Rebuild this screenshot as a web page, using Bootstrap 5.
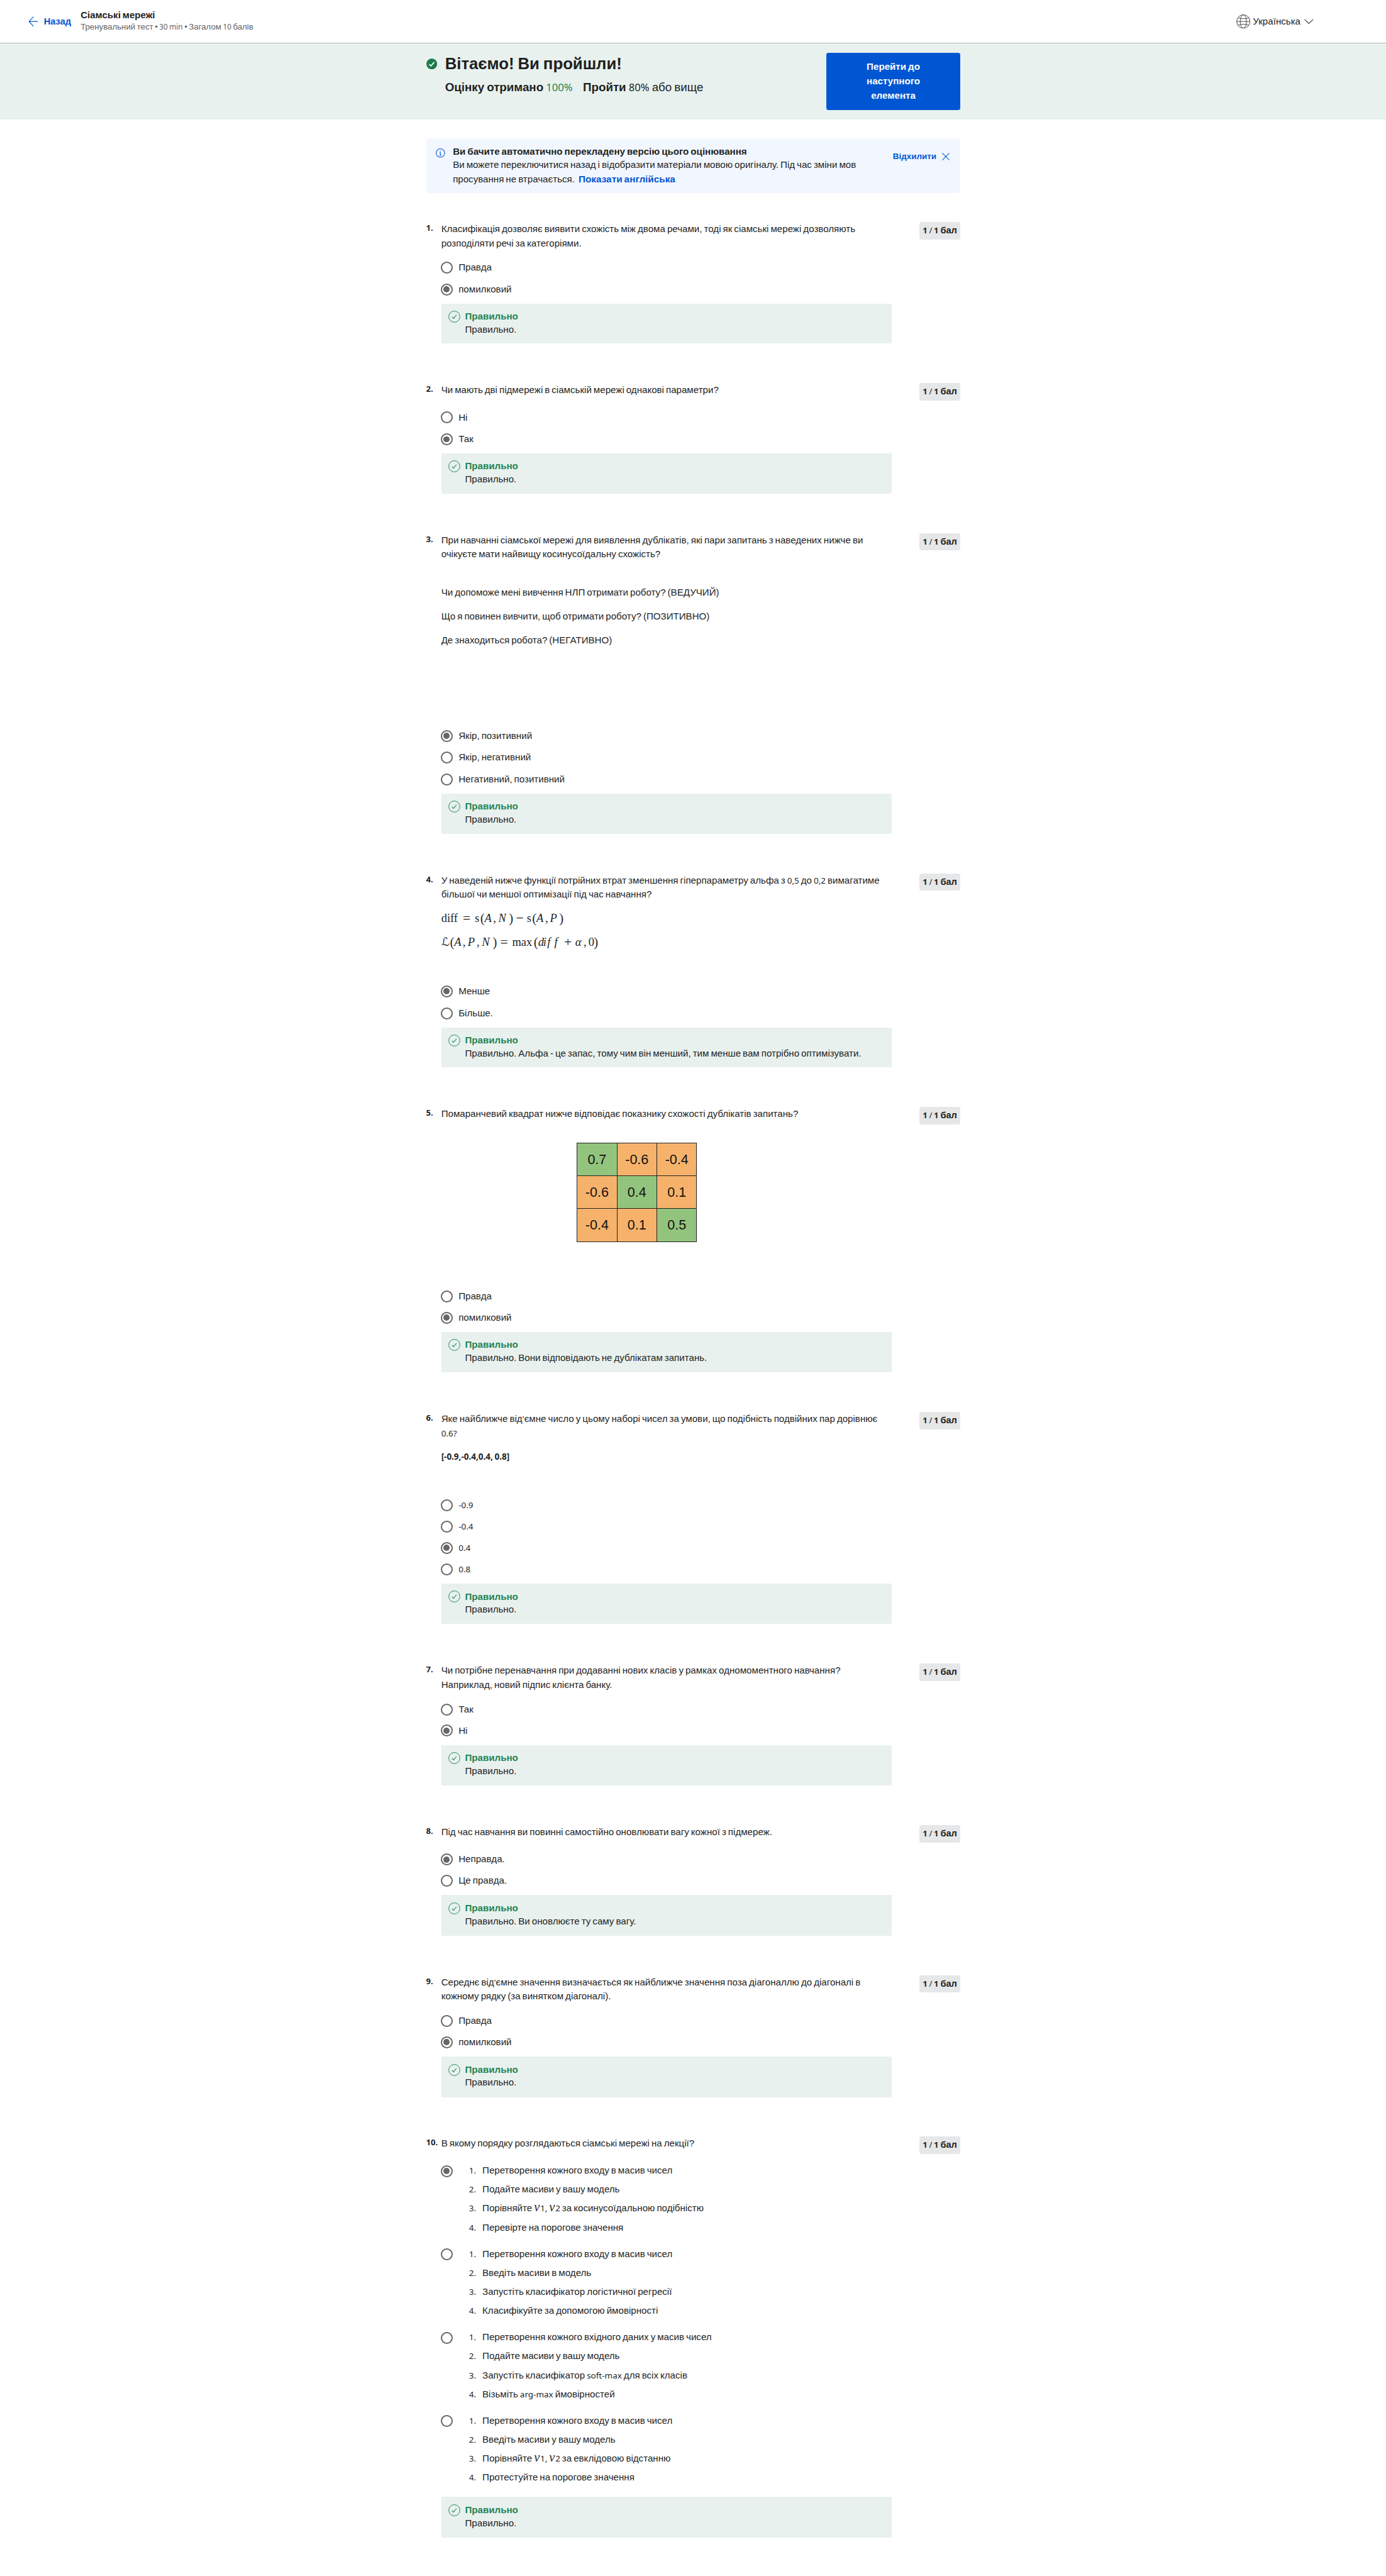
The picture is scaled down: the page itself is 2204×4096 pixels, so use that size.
<!DOCTYPE html>
<html lang="uk">
<head>
<meta charset="utf-8">
<meta name="viewport" content="width=device-width, initial-scale=1">
<title>Сіамські мережі</title>
<link href="https://cdn.jsdelivr.net/npm/bootstrap@5.3.0/dist/css/bootstrap.min.css" rel="stylesheet">
<script src="https://cdn.jsdelivr.net/npm/bootstrap@5.3.0/dist/js/bootstrap.bundle.min.js"></script>
<style>
html{font-size:8.609375px}
body{font-family:"Liberation Sans",Arial,sans-serif;font-size:1.757rem;line-height:2.64rem;color:#1f1f1f;background:#fff;word-spacing:-.078em}
p,ol{margin:0}
svg{display:block;flex:none}
b,.fw-bold{font-weight:700}
.lt{font-family:"Noto Sans","Open Sans",sans-serif;font-size:.89em;word-spacing:-.05em}
.blue{color:#0056d2}
.green{color:#1f8354}
.ico-lg{width:2.6rem;height:2.6rem}
.ico-ok{width:2.2rem;height:2.2rem}
/* top bar */
.topbar{height:8rem;border-bottom:1px solid #b8b8b8;padding:0 13.4rem 0 5.2rem}
.back{font-size:1.7rem;gap:1.1rem;margin-right:1.75rem}
.back svg{width:1.8rem;height:1.9rem}
.crumb{line-height:2.1rem;font-size:1.75rem}
.crumb .meta{font-size:1.54rem;color:#636363}
.lang{gap:.5rem}
.lang .chev{width:1.7rem;height:1rem;margin-left:.2rem}
/* result banner */
.result{background:#e8f1ee;height:14.1rem}
.column{width:98.65rem;margin-left:78.7rem}
.result .seal{width:2rem;height:2rem;margin:2.8rem 1.4rem 0 .1rem}
.result h1{font-size:2.99rem;line-height:3.6rem;font-weight:700;margin:2rem 0 1.28rem}
.score{font-size:2.18rem;gap:1.9rem}
.next{width:24.7rem;height:10.5rem;margin-top:1.8rem;padding:1.28rem 6rem;background:#0056d2;color:#fff;border:0;border-radius:.4rem;font-weight:700;font-size:1.76rem;line-height:2.65rem;word-spacing:-.078em}
/* translation notice */
.notice{margin-top:3.5rem;height:10.1rem;background:#f2f7ff;border-radius:.5rem;padding:1.2rem 1.9rem 0 1.8rem}
.notice .info{width:1.7rem;height:1.7rem;margin:.6rem 1.4rem 0 .05rem}
.notice .head{line-height:2.36rem}
.notice .show{font-size:1.78rem}
.notice .dismiss{font-size:1.56rem;gap:1.1rem;margin-top:.8rem}
.notice .dismiss svg{width:1.4rem;height:1.4rem}
.notice a{text-decoration:none}
/* questions */
.questions{margin-top:5.3rem}
.question{--step:4.02rem;--box:7.4rem;--pad:1.2rem;margin-bottom:7.3rem}
.question.snug{--step:3.93rem;--box:7.5rem;--pad:1.25rem}
.num{width:2.8rem;flex:none;font-size:1.72rem;font-weight:700;line-height:2.24rem;white-space:nowrap}
.main{width:83.2rem}
.points{width:7.5rem;height:3.2rem;line-height:3.2rem;background:#e5e7e8;border-radius:.4rem;font-weight:700;font-size:1.7rem;white-space:nowrap;text-align:center;margin-left:auto}
.points i{font-style:normal;font-weight:400}
.stem{white-space:nowrap}
.stem p+p{margin-top:1.73rem}
.s1{height:6.42rem}.s2{height:4.33rem}.s3{height:35.44rem}.s4{height:19.82rem}.s5{height:33rem}
.s6{height:15.3rem}.s7{height:6.5rem}.s8{height:4.4rem}.s10{height:4.5rem}
.s3 .gap{height:4.45rem}
.s3 .gap+p{margin-top:0}
.choice{height:var(--step);gap:1.1rem}
.dot{width:2.2rem;height:2.2rem;border:2px solid #666;border-radius:50%;flex:none;margin-left:-.1rem;display:flex;align-items:center;justify-content:center}
.dot.on::after{content:"";width:1.15rem;height:1.15rem;border-radius:50%;background:#666}
.verdict{margin-top:calc(2.63rem - var(--step)/2);height:var(--box);background:#e8f1ee;padding:var(--pad) 0 0 1.3rem;line-height:2.4rem;gap:.9rem}
.verdict svg{margin-top:.1rem}
/* formulas */
.eq{display:grid;font-family:"Liberation Serif",serif;font-size:2.15rem;line-height:2.64rem;word-spacing:0}
.eq .par{font-size:2.4rem}
.eq .op{font-size:2.5rem}
.eq .script{font-family:"DejaVu Serif","DejaVu Sans",serif;font-size:2.1rem}
.eq1{margin-top:1.7rem;grid-template-columns:4rem 2.2rem 1rem .8rem 1.6rem .95rem 1.95rem 1.3rem 2rem 1rem .8rem 1.6rem .9rem 1.7rem 1rem}
.eq2{margin-top:1.82rem;grid-template-columns:1.6rem .8rem 1.55rem .95rem 1.65rem .95rem 2rem 1.4rem 2.2rem 4rem .8rem .95rem .75rem 1.3rem 1.8rem 2.05rem 1.55rem .9rem 1rem 1rem}
/* similarity matrix */
.matrix{display:grid;grid-template-columns:repeat(3,7.37rem);grid-auto-rows:6.07rem;width:22.2rem;margin:3.93rem 0 0 25.03rem;background:#f6b26b;color:#111;font-size:2.5rem;border:1px solid #222;border-width:1px 0 0 1px}
.matrix div{display:flex;align-items:center;justify-content:center;padding-top:.2rem;border:1px solid #222;border-width:0 1px 1px 0}
.matrix .hit{background:#93c47d}
/* ordered choices */
.seq{height:15.4rem}
.seq .dot{margin-top:.76rem}
.seq ol{list-style:none;padding:0 0 0 3.03rem;line-height:3.5rem}
.seq li{display:flex;white-space:pre}
.seq li>.lt{width:2.47rem;flex:none}
.seq em{font-family:"Liberation Serif",serif;font-size:1.35em;line-height:1;letter-spacing:.04em}
.q10 .verdict{margin-top:.46rem}
.q10{margin-bottom:0}
</style>
</head>
<body>
<svg width="0" height="0" class="position-absolute">
  <symbol id="ok" viewBox="0 0 22 22"><circle cx="11" cy="11" r="10.3" fill="none" stroke="#1f8354" stroke-width="1.1"/><path d="M6.6 11.6l2.8 2.8 5.6-6.600" fill="none" stroke="#1f8354" stroke-width="1.2"/></symbol>
</svg>

<header class="topbar d-flex align-items-center">
  <a class="back blue fw-bold d-flex align-items-center text-decoration-none" href="#">
    <svg viewBox="0 0 18 19" fill="none" stroke="#0056d2" stroke-width="1.3"><path d="M9.500.7L1.300 9.500 9.500 18.300M1.300 9.500H17.500"/></svg>Назад</a>
  <div class="crumb">
    <div class="fw-bold">Сіамські мережі</div>
    <div class="meta">Тренувальний тест • <span class="lt">30 min</span> • Загалом <span class="lt">10</span> балів</div>
  </div>
  <div class="lang d-flex align-items-center ms-auto">
    <svg class="ico-lg" viewBox="0 0 26 26" fill="none" stroke="#444" stroke-width="1.1"><circle cx="13" cy="13" r="12.3"/><ellipse cx="13" cy="13" rx="5.8" ry="12.3"/><path d="M.7 13h24.6M3 6.2c5.5 2.3 14.5 2.3 20 0M3 19.8c5.5-2.3 14.5-2.3 20 0"/></svg>
    <span>Українська</span>
    <svg class="chev" viewBox="0 0 17 10" fill="none" stroke="#333" stroke-width="1.3"><path d="M.7 1l7.8 7.6L16.3 1"/></svg>
  </div>
</header>

<section class="result">
  <div class="column d-flex align-items-start">
    <svg class="seal" viewBox="0 0 20 20"><circle cx="10" cy="10" r="10" fill="#1d7c4d"/><path d="M5.2 10.5l3.3 3.3 6-7" fill="none" stroke="#fff" stroke-width="1.9"/></svg>
    <div>
      <h1>Вітаємо! Ви пройшли!</h1>
      <div class="score d-flex">
        <div><b>Оцінку отримано</b> <span class="lt green">100%</span></div>
        <div><b>Пройти</b> <span class="lt">80%</span> або вище</div>
      </div>
    </div>
    <button class="next ms-auto">Перейти до наступного елемента</button>
  </div>
</section>

<main class="column">
  <div class="notice d-flex align-items-start">
    <svg class="info" viewBox="0 0 17 17" fill="none" stroke="#0056d2" stroke-width="1.2"><circle cx="8.5" cy="8.5" r="7.8"/><path d="M8.5 3.8v1.7M6.8 7.5h1.7v5M6.5 12.5h4"/></svg>
    <div class="text-nowrap">
      <div class="fw-bold head">Ви бачите автоматично перекладену версію цього оцінювання</div>
      <div>Ви можете переключитися назад і відобразити матеріали мовою оригіналу. Під час зміни мов<br>просування не втрачається.&nbsp; <a class="show blue fw-bold" href="#">Показати англійська</a></div>
    </div>
    <a class="dismiss blue fw-bold d-flex align-items-center ms-auto" href="#">Відхилити
      <svg viewBox="0 0 14 14" stroke="#0056d2" stroke-width="1.2"><path d="M.5.5l13 13M13.5.5l-13 13"/></svg></a>
  </div>

  <div class="questions">
    <section class="question d-flex align-items-start">
      <div class="num"><span class="lt">1.</span></div>
      <div class="main">
        <div class="stem s1"><p>Класифікація дозволяє виявити схожість між двома речами, тоді як сіамські мережі дозволяють<br>розподіляти речі за категоріями.</p></div>
        <div class="choice d-flex align-items-center"><span class="dot"></span>Правда</div>
        <div class="choice d-flex align-items-center"><span class="dot on"></span>помилковий</div>
        <div class="verdict d-flex align-items-start"><svg class="ico-ok"><use href="#ok"/></svg><div><b class="green">Правильно</b><div>Правильно.</div></div></div>
      </div>
      <div class="points"><span class="lt">1 <i>/</i> 1</span> бал</div>
    </section>

    <section class="question d-flex align-items-start">
      <div class="num"><span class="lt">2.</span></div>
      <div class="main">
        <div class="stem s2"><p>Чи мають дві підмережі в сіамській мережі однакові параметри?</p></div>
        <div class="choice d-flex align-items-center"><span class="dot"></span>Ні</div>
        <div class="choice d-flex align-items-center"><span class="dot on"></span>Так</div>
        <div class="verdict d-flex align-items-start"><svg class="ico-ok"><use href="#ok"/></svg><div><b class="green">Правильно</b><div>Правильно.</div></div></div>
      </div>
      <div class="points"><span class="lt">1 <i>/</i> 1</span> бал</div>
    </section>

    <section class="question d-flex align-items-start">
      <div class="num"><span class="lt">3.</span></div>
      <div class="main">
        <div class="stem s3"><p>При навчанні сіамської мережі для виявлення дублікатів, які пари запитань з наведених нижче ви<br>очікуєте мати найвищу косинусоїдальну схожість?</p>
          <div class="gap"></div>
          <p>Чи допоможе мені вивчення НЛП отримати роботу? (ВЕДУЧИЙ)</p>
          <p>Що я повинен вивчити, щоб отримати роботу? (ПОЗИТИВНО)</p>
          <p>Де знаходиться робота? (НЕГАТИВНО)</p></div>
        <div class="choice d-flex align-items-center"><span class="dot on"></span>Якір, позитивний</div>
        <div class="choice d-flex align-items-center"><span class="dot"></span>Якір, негативний</div>
        <div class="choice d-flex align-items-center"><span class="dot"></span>Негативний, позитивний</div>
        <div class="verdict d-flex align-items-start"><svg class="ico-ok"><use href="#ok"/></svg><div><b class="green">Правильно</b><div>Правильно.</div></div></div>
      </div>
      <div class="points"><span class="lt">1 <i>/</i> 1</span> бал</div>
    </section>

    <section class="question d-flex align-items-start">
      <div class="num"><span class="lt">4.</span></div>
      <div class="main">
        <div class="stem s4"><p>У наведеній нижче функції потрійних втрат зменшення гіперпараметру альфа з <span class="lt">0,5</span> до <span class="lt">0,2</span> вимагатиме<br>більшої чи меншої оптимізації під час навчання?</p>
          <div class="eq eq1"><span>diff</span><span class="op">=</span><span>s</span><span class="par">(</span><i>A</i><span>,</span><i>N</i><span class="par">)</span><span class="op">−</span><span>s</span><span class="par">(</span><i>A</i><span>,</span><i>P</i><span class="par">)</span></div>
          <div class="eq eq2"><span class="script">ℒ</span><span class="par">(</span><i>A</i><span>,</span><i>P</i><span>,</span><i>N</i><span class="par">)</span><span class="op">=</span><span>max</span><span class="par">(</span><i>d</i><i>i</i><i>f</i><i>f</i><span class="op">+</span><i>α</i><span>,</span><span>0</span><span class="par">)</span></div></div>
        <div class="choice d-flex align-items-center"><span class="dot on"></span>Менше</div>
        <div class="choice d-flex align-items-center"><span class="dot"></span>Більше.</div>
        <div class="verdict d-flex align-items-start"><svg class="ico-ok"><use href="#ok"/></svg><div><b class="green">Правильно</b><div>Правильно. Альфа - це запас, тому чим він менший, тим менше вам потрібно оптимізувати.</div></div></div>
      </div>
      <div class="points"><span class="lt">1 <i>/</i> 1</span> бал</div>
    </section>

    <section class="question snug d-flex align-items-start">
      <div class="num"><span class="lt">5.</span></div>
      <div class="main">
        <div class="stem s5"><p>Помаранчевий квадрат нижче відповідає показнику схожості дублікатів запитань?</p>
          <div class="matrix"><div class="hit">0.7</div><div>-0.6</div><div>-0.4</div><div>-0.6</div><div class="hit">0.4</div><div>0.1</div><div>-0.4</div><div>0.1</div><div class="hit">0.5</div></div></div>
        <div class="choice d-flex align-items-center"><span class="dot"></span>Правда</div>
        <div class="choice d-flex align-items-center"><span class="dot on"></span>помилковий</div>
        <div class="verdict d-flex align-items-start"><svg class="ico-ok"><use href="#ok"/></svg><div><b class="green">Правильно</b><div>Правильно. Вони відповідають не дублікатам запитань.</div></div></div>
      </div>
      <div class="points"><span class="lt">1 <i>/</i> 1</span> бал</div>
    </section>

    <section class="question snug d-flex align-items-start">
      <div class="num"><span class="lt">6.</span></div>
      <div class="main">
        <div class="stem s6"><p>Яке найближче від<span class="lt">'</span>ємне число у цьому наборі чисел за умови, що подібність подвійних пар дорівнює<br><span class="lt">0.6?</span></p>
          <p><b class="lt">[-0.9,-0.4,0.4, 0.8]</b></p></div>
        <div class="choice d-flex align-items-center"><span class="dot"></span><span class="lt">-0.9</span></div>
        <div class="choice d-flex align-items-center"><span class="dot"></span><span class="lt">-0.4</span></div>
        <div class="choice d-flex align-items-center"><span class="dot on"></span><span class="lt">0.4</span></div>
        <div class="choice d-flex align-items-center"><span class="dot"></span><span class="lt">0.8</span></div>
        <div class="verdict d-flex align-items-start"><svg class="ico-ok"><use href="#ok"/></svg><div><b class="green">Правильно</b><div>Правильно.</div></div></div>
      </div>
      <div class="points"><span class="lt">1 <i>/</i> 1</span> бал</div>
    </section>

    <section class="question snug d-flex align-items-start">
      <div class="num"><span class="lt">7.</span></div>
      <div class="main">
        <div class="stem s7"><p>Чи потрібне перенавчання при додаванні нових класів у рамках одномоментного навчання?<br>Наприклад, новий підпис клієнта банку.</p></div>
        <div class="choice d-flex align-items-center"><span class="dot"></span>Так</div>
        <div class="choice d-flex align-items-center"><span class="dot on"></span>Ні</div>
        <div class="verdict d-flex align-items-start"><svg class="ico-ok"><use href="#ok"/></svg><div><b class="green">Правильно</b><div>Правильно.</div></div></div>
      </div>
      <div class="points"><span class="lt">1 <i>/</i> 1</span> бал</div>
    </section>

    <section class="question snug d-flex align-items-start">
      <div class="num"><span class="lt">8.</span></div>
      <div class="main">
        <div class="stem s8"><p>Під час навчання ви повинні самостійно оновлювати вагу кожної з підмереж.</p></div>
        <div class="choice d-flex align-items-center"><span class="dot on"></span>Неправда.</div>
        <div class="choice d-flex align-items-center"><span class="dot"></span>Це правда.</div>
        <div class="verdict d-flex align-items-start"><svg class="ico-ok"><use href="#ok"/></svg><div><b class="green">Правильно</b><div>Правильно. Ви оновлюєте ту саму вагу.</div></div></div>
      </div>
      <div class="points"><span class="lt">1 <i>/</i> 1</span> бал</div>
    </section>

    <section class="question snug d-flex align-items-start">
      <div class="num"><span class="lt">9.</span></div>
      <div class="main">
        <div class="stem s7"><p>Середнє від<span class="lt">'</span>ємне значення визначається як найближче значення поза діагоналлю до діагоналі в<br>кожному рядку (за винятком діагоналі).</p></div>
        <div class="choice d-flex align-items-center"><span class="dot"></span>Правда</div>
        <div class="choice d-flex align-items-center"><span class="dot on"></span>помилковий</div>
        <div class="verdict d-flex align-items-start"><svg class="ico-ok"><use href="#ok"/></svg><div><b class="green">Правильно</b><div>Правильно.</div></div></div>
      </div>
      <div class="points"><span class="lt">1 <i>/</i> 1</span> бал</div>
    </section>

    <section class="question snug q10 d-flex align-items-start">
      <div class="num"><span class="lt">10.</span></div>
      <div class="main">
        <div class="stem s10"><p>В якому порядку розглядаються сіамські мережі на лекції?</p></div>
        <div class="seq d-flex align-items-start"><span class="dot on"></span><ol>
          <li><span class="lt">1.</span>Перетворення кожного входу в масив чисел</li>
          <li><span class="lt">2.</span>Подайте масиви у вашу модель</li>
          <li><span class="lt">3.</span><span>Порівняйте <em>v</em><span class="lt">1, </span><em>v</em><span class="lt">2</span> за косинусоїдальною подібністю</span></li>
          <li><span class="lt">4.</span>Перевірте на порогове значення</li></ol></div>
        <div class="seq d-flex align-items-start"><span class="dot"></span><ol>
          <li><span class="lt">1.</span>Перетворення кожного входу в масив чисел</li>
          <li><span class="lt">2.</span>Введіть масиви в модель</li>
          <li><span class="lt">3.</span>Запустіть класифікатор логістичної регресії</li>
          <li><span class="lt">4.</span>Класифікуйте за допомогою ймовірності</li></ol></div>
        <div class="seq d-flex align-items-start"><span class="dot"></span><ol>
          <li><span class="lt">1.</span>Перетворення кожного вхідного даних у масив чисел</li>
          <li><span class="lt">2.</span>Подайте масиви у вашу модель</li>
          <li><span class="lt">3.</span><span>Запустіть класифікатор <span class="lt">soft-max</span> для всіх класів</span></li>
          <li><span class="lt">4.</span><span>Візьміть <span class="lt">arg-max</span> ймовірностей</span></li></ol></div>
        <div class="seq d-flex align-items-start"><span class="dot"></span><ol>
          <li><span class="lt">1.</span>Перетворення кожного входу в масив чисел</li>
          <li><span class="lt">2.</span>Введіть масиви у вашу модель</li>
          <li><span class="lt">3.</span><span>Порівняйте <em>v</em><span class="lt">1, </span><em>v</em><span class="lt">2</span> за евклідовою відстанню</span></li>
          <li><span class="lt">4.</span>Протестуйте на порогове значення</li></ol></div>
        <div class="verdict d-flex align-items-start"><svg class="ico-ok"><use href="#ok"/></svg><div><b class="green">Правильно</b><div>Правильно.</div></div></div>
      </div>
      <div class="points"><span class="lt">1 <i>/</i> 1</span> бал</div>
    </section>
  </div>
</main>
</body>
</html>
